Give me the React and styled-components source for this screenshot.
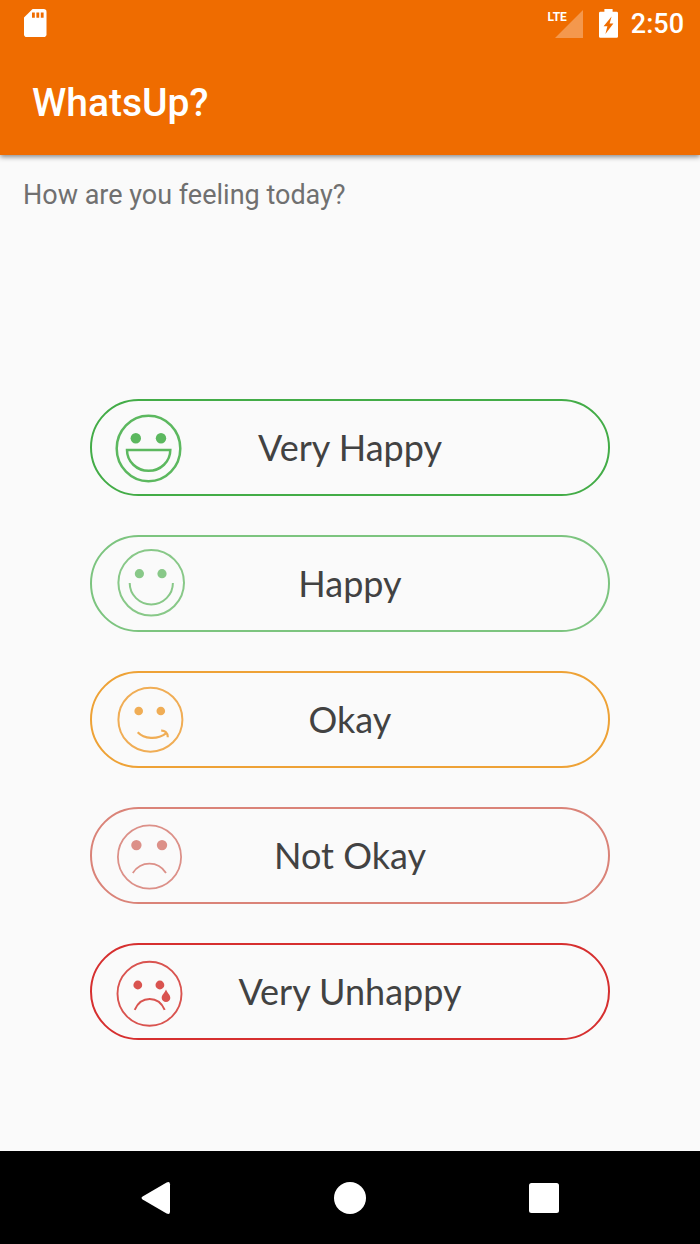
import React, { useState } from "react";
import styled, { createGlobalStyle } from "styled-components";

const moods = [
  { id: "very-happy", label: "Very Happy", color: "#43ac47", ink: "#5cb85f", Face: VeryHappyFace },
  { id: "happy", label: "Happy", color: "#7cc47f", ink: "#88c888", Face: HappyFace },
  { id: "okay", label: "Okay", color: "#eea236", ink: "#f0ad55", Face: OkayFace },
  { id: "not-okay", label: "Not Okay", color: "#da8378", ink: "#dc9088", Face: NotOkayFace },
  { id: "very-unhappy", label: "Very Unhappy", color: "#d62f2f", ink: "#d9534f", Face: VeryUnhappyFace }
];

function App() {
  const [mood, setMood] = useState(null);

  return (
    <Screen>
      <GlobalStyle />
      <Header>
        <StatusBar>
          <SdCardIcon />
          <StatusGroup>
            <Signal>
              <SignalIcon />
              <Network>LTE</Network>
            </Signal>
            <BatteryIcon />
            <Clock>2:50</Clock>
          </StatusGroup>
        </StatusBar>
        <Title>WhatsUp?</Title>
      </Header>

      <Main>
        <Question id="question">How are you feeling today?</Question>
        <MoodList aria-labelledby="question">
          {moods.map(({ id, label, color, ink, Face }) => (
            <li key={id}>
              <MoodButton
                type="button"
                $color={color}
                $ink={ink}
                aria-pressed={mood === id}
                onClick={() => setMood(id)}
              >
                <Face />
                <Label>{label}</Label>
              </MoodButton>
            </li>
          ))}
        </MoodList>
      </Main>

      <NavBar>
        <NavButton type="button" aria-label="Back">
          <svg width="32" height="34" viewBox="0 0 32 34" fill="#fff">
            <path d="M2.6 15.6 26.6 1.4Q30 0 30 3.2V30.8Q30 34 26.6 32.6L2.6 18.4Q.4 17 2.6 15.6Z" />
          </svg>
        </NavButton>
        <NavButton type="button" aria-label="Home">
          <svg width="32" height="32" viewBox="0 0 32 32" fill="#fff">
            <circle cx="16" cy="16" r="16" />
          </svg>
        </NavButton>
        <NavButton type="button" aria-label="Recent apps">
          <svg width="30" height="30" viewBox="0 0 30 30" fill="#fff">
            <rect width="30" height="30" rx="2.5" />
          </svg>
        </NavButton>
      </NavBar>
    </Screen>
  );
}

export default App;

function VeryHappyFace() {
  return (
    <Icon viewBox="0 0 73 73" strokeWidth="2.5">
      <ellipse cx="34.5" cy="37.5" rx="31.8" ry="32.8" />
      <Dot cx="21.8" cy="27.2" r="5.2" />
      <Dot cx="47" cy="27.2" r="5.2" />
      <path d="M13 39H56.3A21.6 20.8 0 0 1 13 39Z" />
    </Icon>
  );
}

function HappyFace() {
  return (
    <Icon viewBox="0 0 73 73" strokeWidth="2">
      <circle cx="37.2" cy="35.8" r="32.8" />
      <Dot cx="25.4" cy="26.7" r="4.6" />
      <Dot cx="48" cy="26.7" r="4.6" />
      <path d="M15.7 36A21.6 21.4 0 0 0 58.9 36" />
    </Icon>
  );
}

function OkayFace() {
  return (
    <Icon viewBox="0 0 73 73" strokeWidth="2">
      <circle cx="36.4" cy="36.7" r="32" />
      <Dot cx="24.7" cy="28" r="4.3" />
      <Dot cx="46.8" cy="28" r="4.3" />
      <path
        d="M23.7 49.3C30 56 43 57.2 52 50.4M47.2 47.6C50.5 47.4 54 49.5 53.8 54.3"
        strokeWidth="2.2"
      />
    </Icon>
  );
}

function NotOkayFace() {
  return (
    <Icon viewBox="0 0 73 73" strokeWidth="1.8">
      <circle cx="35.5" cy="38" r="31.6" />
      <Dot cx="22.4" cy="26.1" r="5.2" />
      <Dot cx="48" cy="26.1" r="5.2" />
      <path d="M18.8 54C27 41.6 44 41.6 52 54" />
    </Icon>
  );
}

function VeryUnhappyFace() {
  return (
    <Icon viewBox="0 0 73 73" strokeWidth="1.9">
      <circle cx="35.5" cy="38.8" r="32" />
      <Dot cx="23.8" cy="30" r="4.4" />
      <Dot cx="45.9" cy="30" r="4.4" />
      <path d="M20.7 54.8C27 40.4 44.4 40.4 50.7 54.8" strokeWidth="2" />
      <Tear d="M52 34.6C53.5 38.2 56.3 40 56.3 42.9A4.3 4.2 0 0 1 47.7 42.9C47.7 40 50.5 38.2 52 34.6Z" />
    </Icon>
  );
}

function SdCardIcon() {
  return (
    <svg width="23" height="29" viewBox="0 0 23 29" aria-hidden="true">
      <path
        d="M8.6 0H19.6Q22.5 0 22.5 2.8V25.2Q22.5 28 19.6 28H2.8Q0 28 0 25.2V8.6Z"
        fill="#fff"
      />
      <path d="M8 3.4h2.8v5.4H8zM12.4 3.4h2.8v5.4h-2.8zM16.8 3.4h2.8v5.4h-2.8z" fill="#ef6c00" />
    </svg>
  );
}

function SignalIcon() {
  return (
    <svg width="28" height="28" viewBox="0 0 28 28" aria-hidden="true">
      <path d="M28 0V28H0Z" fill="#fff" fillOpacity="0.3" />
    </svg>
  );
}

function BatteryIcon() {
  return (
    <svg width="19" height="29" viewBox="0 0 19 29" aria-hidden="true">
      <path
        d="M5.4 0H13.6V2.8H17.6Q19 2.8 19 4.2V27.4Q19 28.8 17.6 28.8H1.4Q0 28.8 0 27.4V4.2Q0 2.8 1.4 2.8H5.4Z"
        fill="#fff"
      />
      <path d="M12.6 7.4 4.6 17.2H8.4L6.4 25 14.4 14.4H10.6Z" fill="#ef6c00" />
    </svg>
  );
}

const GlobalStyle = createGlobalStyle`
  body {
    margin: 0;
    background: #fafafa;
    font-family: Roboto, "Liberation Sans", sans-serif;
  }

  svg {
    display: block;
  }
`;

const Screen = styled.div`
  display: flex;
  flex-direction: column;
  min-height: 100vh;
`;

const Header = styled.header`
  background: #ef6c00;
  color: white;
  box-shadow: 0 2px 5px rgba(0, 0, 0, 0.45);
`;

const StatusBar = styled.div`
  display: flex;
  align-items: center;
  justify-content: space-between;
  height: 47px;
  padding: 0 16px 0 24px;
`;

const StatusGroup = styled.div`
  display: flex;
  align-items: center;
`;

const Signal = styled.div`
  position: relative;
  margin-right: 16px;
`;

const Network = styled.span`
  position: absolute;
  top: 0;
  right: 16px;
  font-size: 12px;
  font-weight: 700;
  line-height: 14px;
`;

const Clock = styled.time`
  margin-left: 13px;
  font-size: 27px;
  font-weight: 500;
  line-height: 32px;
`;

const Title = styled.h1`
  margin: 0;
  padding: 32px 32px 28px;
  font-size: 39px;
  font-weight: 500;
  line-height: 48px;
`;

const Main = styled.main`
  display: flex;
  flex: 1;
  flex-direction: column;
`;

const Question = styled.p`
  margin: 0;
  padding: 24px 23px;
  color: #707070;
  font-size: 27px;
  line-height: 32px;
`;

const MoodList = styled.ul`
  display: flex;
  flex: 1;
  flex-direction: column;
  justify-content: center;
  gap: 39px;
  margin: 0;
  padding: 108px 90px 56px;
  list-style: none;
`;

const MoodButton = styled.button`
  display: grid;
  grid-template-columns: 73px 1fr 73px;
  align-items: center;
  box-sizing: border-box;
  width: 100%;
  height: 97px;
  padding: 0 22px;
  border: 2px solid ${({ $color }) => $color};
  border-radius: 49px;
  background: transparent;
  color: ${({ $ink }) => $ink};
  cursor: pointer;
`;

const Label = styled.span`
  color: #424242;
  font-family: Lato, "Open Sans", sans-serif;
  font-size: 36px;
  line-height: 44px;
  white-space: nowrap;
`;

const Icon = styled.svg.attrs({ "aria-hidden": true })`
  width: 73px;
  height: 73px;
  fill: none;
  stroke: currentColor;
`;

const Dot = styled.circle`
  fill: currentColor;
  stroke: none;
`;

const Tear = styled.path`
  fill: currentColor;
  stroke: none;
`;

const NavBar = styled.nav`
  display: flex;
  justify-content: center;
  height: 93px;
  background: black;
`;

const NavButton = styled.button`
  display: flex;
  align-items: center;
  justify-content: center;
  width: 194px;
  padding: 0;
  border: none;
  background: transparent;
`;
